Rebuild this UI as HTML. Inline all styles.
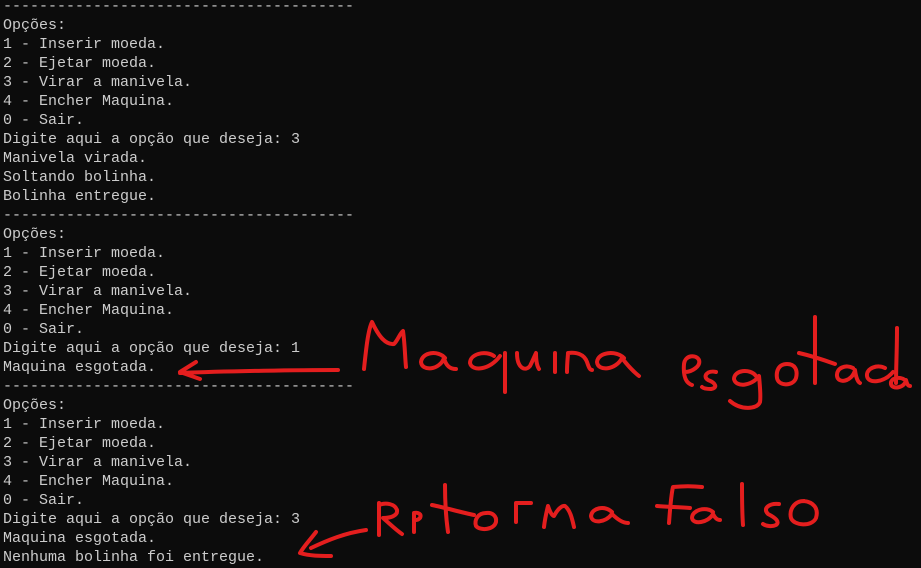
<!DOCTYPE html>
<html><head><meta charset="utf-8"><style>
html,body{margin:0;padding:0;background:#0c0c0c;width:921px;height:568px;overflow:hidden}
pre{margin:0;position:absolute;left:3px;top:-3px;font-family:"Liberation Mono",monospace;font-size:15px;line-height:19px;color:#cccccc}
svg{position:absolute;left:0;top:0}
</style></head><body>
<pre>---------------------------------------
Opções:
1 - Inserir moeda.
2 - Ejetar moeda.
3 - Virar a manivela.
4 - Encher Maquina.
0 - Sair.
Digite aqui a opção que deseja: 3
Manivela virada.
Soltando bolinha.
Bolinha entregue.
---------------------------------------
Opções:
1 - Inserir moeda.
2 - Ejetar moeda.
3 - Virar a manivela.
4 - Encher Maquina.
0 - Sair.
Digite aqui a opção que deseja: 1
Maquina esgotada.
---------------------------------------
Opções:
1 - Inserir moeda.
2 - Ejetar moeda.
3 - Virar a manivela.
4 - Encher Maquina.
0 - Sair.
Digite aqui a opção que deseja: 3
Maquina esgotada.
Nenhuma bolinha foi entregue.</pre>
<svg width="921" height="568" fill="none" stroke="#e41e1e" stroke-width="4" stroke-linecap="round" stroke-linejoin="round">
<path d="M338 370 C300 370 230 371 180 373 M196 362 L180 372 L200 379"/>
<path d="M364 369 C366 350 368 330 372 322 C378 335 385 345 394 344 C398 340 400 333 403 331 C405 345 405 358 406 367"/>
<path d="M445 358 C438 350 422 352 421 362 C422 372 440 370 444 358 C446 366 450 369 456 369"/>
<path d="M494 356 C485 350 470 354 470 363 C472 372 490 370 500 356 M505 353 C505 370 505 382 505 392"/>
<path d="M517 353 C517 368 525 372 530 366 C533 360 535 355 536 353 C536 360 537 366 539 369"/>
<path d="M555 353 L555 372"/>
<path d="M567 372 C567 362 568 356 568 353 C576 352 584 354 587 362 C589 368 590 370 592 370"/>
<path d="M624 358 C616 350 598 352 597 362 C598 372 616 370 622 358 C628 366 634 372 639 376"/>
<path d="M685 372 C692 372 701 366 699 360 C696 354 685 355 684 364 C683 376 686 383 692 385"/>
<path d="M716 372 C708 370 702 376 708 380 C716 383 718 388 711 389 C706 389 703 388 702 387"/>
<path d="M756 376 C750 368 734 370 734 379 C736 388 752 386 759 376 C760 386 761 396 760 402 C757 410 740 410 730 401"/>
<path d="M787 364 C778 364 776 372 777 378 C778 386 793 387 796 378 C798 370 795 364 787 364"/>
<path d="M815 317 C815 340 815 365 815 383 M799 353 C812 356 824 360 835 364"/>
<path d="M853 368 C846 364 836 368 837 376 C838 384 852 382 855 370 C856 378 858 382 860 383"/>
<path d="M885 368 C878 364 866 368 867 376 C868 384 884 383 893 372 M897 328 C897 350 896 368 896 383"/>
<path d="M905 380 C900 376 890 378 891 384 C892 390 905 388 906 380 C907 384 908 386 910 386"/>
<path d="M366 530 C345 533 328 540 311 548 M316 532 C310 540 304 546 300 553 C310 556 320 556 331 556"/>
<path d="M379 503 L379 535 M379 505 C386 502 395 504 397 510 C398 516 390 518 383 518 C390 524 396 530 402 534"/>
<path d="M414 532 L414 513 C418 512 422 514 420 518 C417 521 415 520 414 519"/>
<path d="M445 485 C445 500 446 518 448 532 M432 505 C446 508 460 512 474 515"/>
<path d="M486 513 C478 513 474 520 476 526 C480 531 494 530 496 522 C497 516 492 512 486 513"/>
<path d="M516 522 C516 515 516 508 516 503 C521 503 526 503 531 503"/>
<path d="M544 527 C545 518 547 510 548 506 C550 512 552 516 554 516 C557 510 562 505 565 506 C570 510 572 518 574 527"/>
<path d="M612 512 C604 505 592 508 591 516 C592 524 605 523 612 514 C618 520 623 523 628 523"/>
<path d="M669 523 C670 510 671 495 673 487 C683 486 693 486 702 487 M657 506 C668 507 679 507 690 508"/>
<path d="M713 512 C706 506 692 510 692 518 C693 525 708 523 713 514 C715 518 717 520 720 520"/>
<path d="M742 484 C742 498 742 512 743 525"/>
<path d="M779 504 C770 503 762 508 768 514 C776 518 780 522 776 525 C772 527 766 526 763 524"/>
<path d="M804 501 C794 501 789 510 791 518 C794 526 812 527 816 518 C819 508 813 502 804 501"/>
</svg>
</body></html>
